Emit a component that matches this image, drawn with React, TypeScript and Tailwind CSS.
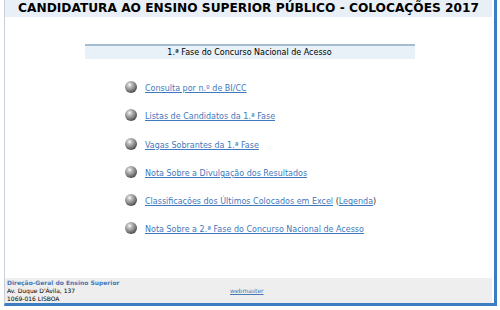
import React from 'react';

const links: { label: string; extra?: string }[] = [
  { label: 'Consulta por n.º de BI/CC' },
  { label: 'Listas de Candidatos da 1.ª Fase' },
  { label: 'Vagas Sobrantes da 1.ª Fase' },
  { label: 'Nota Sobre a Divulgação dos Resultados' },
  { label: 'Classificações dos Últimos Colocados em Excel', extra: 'Legenda' },
  { label: 'Nota Sobre a 2.ª Fase do Concurso Nacional de Acesso' },
];

const Bullet: React.FC = () => (
  <span className="block w-[12px] h-[12px] rounded-full shrink-0 bg-[radial-gradient(circle_at_38%_32%,#ffffff_0%,#c4c4c4_18%,#7a7a7a_55%,#333333_85%,#1e1e1e_100%)]" />
);

const App: React.FC = () => {
  return (
    <div className="w-[500px] h-[310px] bg-white font-['DejaVu_Sans',Verdana,sans-serif]">
      <div className="ml-[4px] w-[493px] h-[306px] flex flex-col border-l border-l-[#c9d2dc] border-r-[3px] border-b-[3px] border-r-[#3c7cc0] border-b-[#3c7cc0]">
        {/* Title */}
        <div className="mr-[2px] h-[17px] bg-[#e8eff7] flex items-center justify-center">
          <h1 className="text-[12.2px] font-bold text-black leading-none whitespace-nowrap">
            CANDIDATURA AO ENSINO SUPERIOR PÚBLICO - COLOCAÇÕES 2017
          </h1>
        </div>

        {/* Sub header */}
        <div className="mt-[27px] mx-auto w-[330px] h-[15px] bg-[#e8f0f8] border-t-2 border-t-[#a6bccf] flex items-center justify-center">
          <span className="text-[8px] text-black leading-none">1.ª Fase do Concurso Nacional de Acesso</span>
        </div>

        {/* Links */}
        <ul className="mt-[22px] ml-[120px] flex flex-col gap-[16.3px]">
          {links.map((l) => (
            <li key={l.label} className="flex items-center gap-[8px] h-[12px]">
              <Bullet />
              <span className="text-[8px] leading-none mt-[4px] text-[#333]">
                <a href="#" className="text-[#3f78bd] underline">{l.label}</a>
                {l.extra && (
                  <>
                    {' '}(<a href="#" className="text-[#3f78bd] underline">{l.extra}</a>)
                  </>
                )}
              </span>
            </li>
          ))}
        </ul>

        <div className="flex-1" />

        {/* Footer */}
        <div className="mr-[2px] h-[25px] bg-[#eeeeee] flex items-center pl-[2px]">
          <div className="w-[223px] text-[6px] leading-[8px] text-black">
            <div className="font-bold text-[#4a78b4]">Direção-Geral do Ensino Superior</div>
            <div>Av. Duque D'Ávila, 137</div>
            <div>1069-016 LISBOA</div>
          </div>
          <a href="#" className="text-[6px] text-[#4a78b4] underline">webmaster</a>
        </div>
      </div>
    </div>
  );
};

export default App;
